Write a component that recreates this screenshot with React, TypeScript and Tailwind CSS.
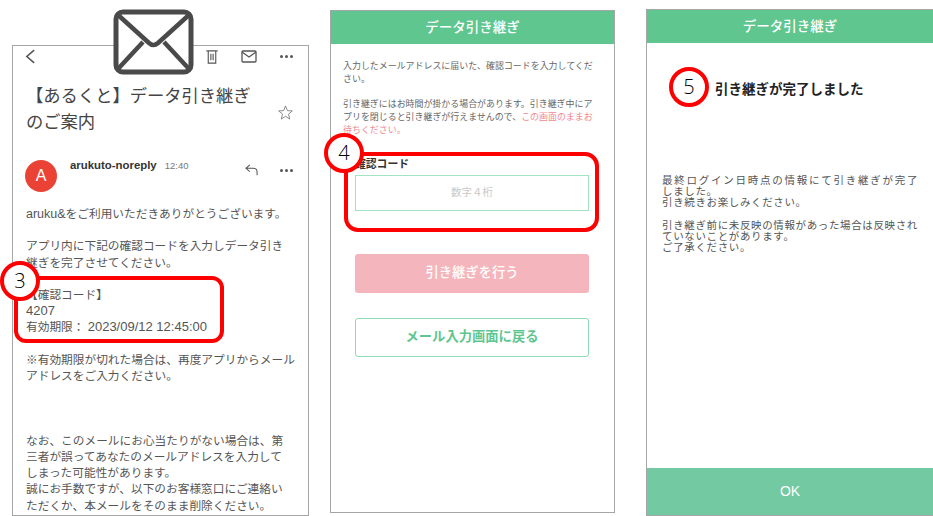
const cjk = "font-['Liberation_Sans','Noto_Sans_CJK_JP',sans-serif]";

function Marker({ n, className }: { n: number; className: string }) {
  return (
    <div
      className={`absolute flex h-[40px] w-[40px] items-center justify-center rounded-full border-[4px] border-[#ff0000] bg-white font-['Open_Sans',sans-serif] text-[20px] font-light text-black ${className}`}
    >
      {n}
    </div>
  );
}

function MailMark() {
  return (
    <svg viewBox="0 0 81 66" className="h-[66px] w-[81px]" fill="none" stroke="#4a4a4a">
      <rect x="3" y="3" width="75" height="60" rx="7" fill="#fff" strokeWidth="5" />
      <path d="M4 5 L36 34 Q40.500 38 45 34 L77 5" strokeWidth="4.500" />
      <path d="M4 61 L30 33 M77 61 L51 33" strokeWidth="4.500" />
    </svg>
  );
}

function Dots() {
  return (
    <div className="flex w-[13px] justify-between">
      <span className="h-[3px] w-[3px] rounded-full bg-[#555]" />
      <span className="h-[3px] w-[3px] rounded-full bg-[#555]" />
      <span className="h-[3px] w-[3px] rounded-full bg-[#555]" />
    </div>
  );
}

function MailPhone() {
  return (
    <div className="ml-[12px] mt-[45px] h-[471px] w-[297px] shrink-0 border border-[#a6a6a6] text-[#555]">
      <div className="flex h-[21px] items-center pl-[12px] pr-[15px]">
        <svg viewBox="0 0 12 18" className="h-[17px] w-[11px]" fill="none" stroke="#555" strokeWidth="1.700">
          <path d="M10 2 L2 9 L10 16" />
        </svg>
        <div className="ml-auto flex items-center gap-[23px]">
          <svg viewBox="0 0 12 16" className="-ml-[1px] h-[15px] w-[12px]" fill="none" stroke="#555" strokeWidth="1.200">
            <path d="M0 2 H12 M2 2 V15 H10 V2 M4.800 5 V12 M7.200 5 V12" />
          </svg>
          <svg viewBox="0 0 16 13" className="h-[13px] w-[16px]" fill="none" stroke="#555" strokeWidth="1.300">
            <rect x="1" y="1" width="14" height="11" rx="1" />
            <path d="M1 2 L8 7 L15 2" />
          </svg>
          <Dots />
        </div>
      </div>
      <div className="flex pl-[13px] pr-[15px] pt-[16px]">
        <h1 className="whitespace-nowrap text-[17.300px] font-normal leading-[26px] text-[#444]">
          【あるくと】データ引き継ぎ
          <br />
          のご案内
        </h1>
        <svg viewBox="0 0 16 16" className="ml-auto mt-[22px] h-[15px] w-[15px]" fill="none" stroke="#777" strokeWidth="0.900">
          <path d="M8 1 L10 6 L15.300 6.300 L11.200 9.700 L12.500 15 L8 12 L3.500 15 L4.800 9.700 L0.700 6.300 L6 6 Z" />
        </svg>
      </div>
      <div className="flex pl-[12px] pr-[15px] pt-[21px]">
        <div className="mt-[4px] flex h-[32px] w-[32px] items-center justify-center rounded-full bg-[#ea4335] text-[16px] text-white">A</div>
        <div className="ml-[13px] flex h-[20px] items-center gap-[8px]">
          <span className="text-[11.400px] font-bold text-[#333]">arukuto-noreply</span>
          <span className="text-[9.500px] text-[#777]">12:40</span>
        </div>
        <div className="ml-auto flex h-[28px] items-center gap-[21px]">
          <svg viewBox="0 0 16 14" className="h-[12px] w-[15px]" fill="none" stroke="#555" strokeWidth="1.200">
            <path d="M6 1 L1.500 5 L6 9 M1.500 5 H10 Q14.500 5 14.500 9.500 V13" />
          </svg>
          <Dots />
        </div>
      </div>
      <div className="whitespace-nowrap pl-[13px] pt-[14px] text-[11.700px] leading-[16.200px]">
        <span className="text-[12.500px]">aruku&amp;</span>をご利用いただきありがとうございます。
        <br />
        <br />
        アプリ内に下記の確認コードを入力しデータ引き
        <br />
        継ぎを完了させてください。
        <br />
        <br />
        【確認コード】
        <br />
        <span className="text-[13px]">4207</span>
        <br />
        有効期限： <span className="text-[13px]">2023/09/12 12:45:00</span>
        <br />
        <br />
        ※有効期限が切れた場合は、再度アプリからメール
        <br />
        アドレスをご入力ください。
        <br />
        <br />
        <br />
        <br />
        なお、このメールにお心当たりがない場合は、第
        <br />
        三者が誤ってあなたのメールアドレスを入力して
        <br />
        しまった可能性があります。
        <br />
        誠にお手数ですが、以下のお客様窓口にご連絡い
        <br />
        ただくか、本メールをそのまま削除ください。
      </div>
    </div>
  );
}

function Header() {
  return (
    <div className="flex h-[33px] items-center justify-center bg-[#5fc68f] pt-[1px] text-[13.500px] font-medium text-white">データ引き継ぎ</div>
  );
}

function CodePhone() {
  return (
    <div className="ml-[21px] mt-[10px] h-[503px] w-[285px] shrink-0 border border-[#a6a6a6]">
      <Header />
      <div className="whitespace-nowrap pl-[12px] pt-[16px] text-[8.950px] leading-[12.800px] text-[#666]">
        入力したメールアドレスに届いた、確認コードを入力してくだ
        <br />
        さい。
        <br />
        <br />
        引き継ぎにはお時間が掛かる場合があります。引き継ぎ中にア
        <br />
        プリを閉じると引き継ぎが行えませんので、<span className="text-[#f08a94]">この画面のままお</span>
        <br />
        <span className="text-[#f08a94]">待ちください。</span>
      </div>
      <div className="pl-[24px] pr-[25px] pt-[19px]">
        <div className="text-[10.800px] font-bold leading-[16px] text-[#333]">確認コード</div>
        <div className="mt-[3px] flex h-[36px] items-center justify-center border-[1.500px] border-[#a3e2c5] text-[10.500px] text-[#c8c8c8]">数字４桁</div>
        <div className="mt-[43px] flex h-[39px] items-center justify-center rounded-[3px] bg-[#f4b6bc] text-[13.300px] font-medium text-white">引き継ぎを行う</div>
        <div className="mt-[25px] flex h-[39px] items-center justify-center rounded-[3px] border-[1.500px] border-[#8fdcb4] text-[13.300px] font-bold text-[#5fc68f]">メール入力画面に戻る</div>
      </div>
    </div>
  );
}

function DonePhone() {
  return (
    <div className="ml-[31px] mt-[9px] flex h-[507px] flex-1 flex-col border-y border-l border-[#a6a6a6]">
      <Header />
      <div className="pl-[68px] pt-[38px] text-[13.500px] font-bold leading-[18px] text-[#222]">引き継ぎが完了しました</div>
      <div className="whitespace-nowrap pl-[15px] pt-[76px] text-[10.500px] leading-[11.200px] tracking-[0.630px] text-[#555]">
        <span className="tracking-[1.750px]">最終ログイン日時点の情報にて引き継ぎが完了</span>
        <br />
        しました。
        <br />
        引き続きお楽しみください。
        <br />
        <br />
        引き継ぎ前に未反映の情報があった場合は反映され
        <br />
        ていないことがあります。
        <br />
        ご了承ください。
      </div>
      <div className="mt-auto flex h-[47px] items-center justify-center bg-[#72c9a2] text-[14px] text-white">OK</div>
    </div>
  );
}

export default function App() {
  return (
    <div className={`relative flex h-[516px] w-[933px] overflow-hidden bg-white ${cjk}`}>
      <MailPhone />
      <CodePhone />
      <DonePhone />

      <div className="absolute left-[113px] top-[9px]">
        <MailMark />
      </div>

      <div className="absolute left-[14px] top-[276px] h-[67px] w-[210px] rounded-[12px] border-[4px] border-[#ff0000]" />
      <Marker n={3} className="left-[0px] top-[261px]" />

      <div className="absolute left-[344px] top-[152px] h-[80px] w-[255px] rounded-[14px] border-[4px] border-[#ff0000]" />
      <Marker n={4} className="left-[324px] top-[133px]" />

      <Marker n={5} className="left-[669px] top-[67px]" />
    </div>
  );
}
